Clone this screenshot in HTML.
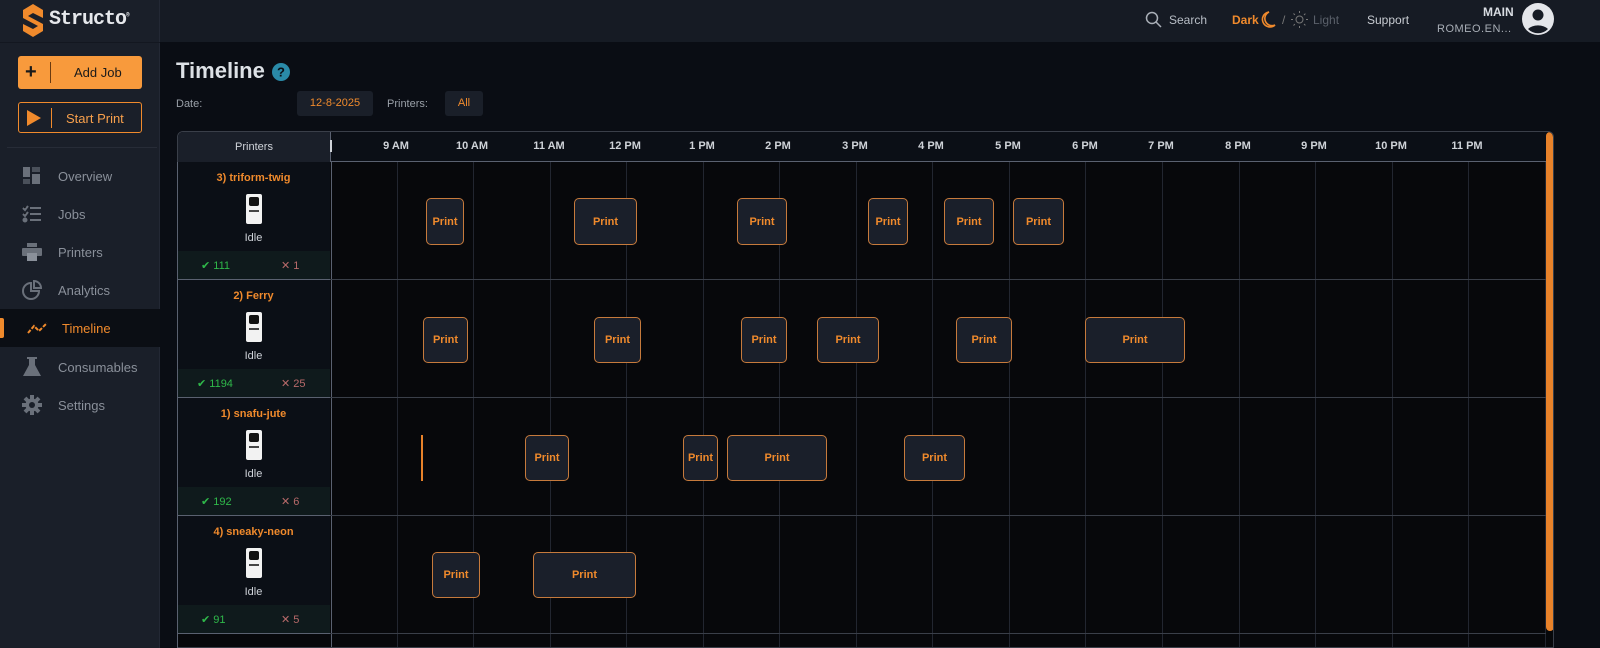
<!DOCTYPE html>
<html><head><meta charset="utf-8"><style>
*{box-sizing:border-box;margin:0;padding:0}
body{width:1600px;height:648px;overflow:hidden;background:#0a0d14;font-family:"Liberation Sans",sans-serif;position:relative;color:#c8ccd2}
.a{position:absolute}
#side{left:0;top:0;width:160px;height:648px;background:#1a1f29;border-right:1px solid #232834}
#top{left:160px;top:0;width:1440px;height:42px;background:#161b24}
.nav{position:absolute;left:0;width:160px;height:38px;font-size:13px;color:#8a909a;display:flex;align-items:center}
.nav svg{position:absolute;left:22px}
.nav span{position:absolute;left:58px}
.print{position:absolute;border:1px solid #c67a3c;border-radius:5px;background:#1a1f2a;color:#f08a2c;font-weight:bold;font-size:11px;display:flex;align-items:center;justify-content:center}
.hl{position:absolute;top:0;width:1px;height:100%;background:#222630}
.hr{position:absolute;top:140px;font-size:11px;font-weight:bold;color:#cfd3d8;transform:translateX(-50%)}
.pc{position:absolute;left:177px;width:153px;background:#0b0f16;border-bottom:1px solid #5a6170;text-align:center}
.pc .n{color:#f08a2c;font-weight:bold;font-size:11px;margin-top:10px}
.pc .ic{margin:10px auto 0;width:16px;height:30px;background:#f2f2f2;border-radius:2px;position:relative}
.pc .ic:before{content:"";position:absolute;left:3px;top:3px;width:10px;height:9px;background:#111;border-radius:2px}
.pc .ic:after{content:"";position:absolute;left:3px;top:16px;width:10px;height:2px;background:#444}
.pc .st{font-size:11px;color:#d0d4da;margin-top:8px}
.pc .bar{position:absolute;left:0;bottom:0;width:100%;height:28px;background:#0f1a1c;font-size:11px}
.ok{position:absolute;left:24px;top:8px;color:#2fb84a}
.ko{position:absolute;left:104px;top:8px;color:#b86a6a}
.rl{position:absolute;left:330px;width:1216px;height:1px;background:#3a3f49}
</style></head><body>
<div id="side" class="a">
 <svg class="a" style="left:22px;top:3px" width="22" height="35" viewBox="0 0 22 35"><path d="M11 1 L21 7 L21 15 L11 10 L6 13 L21 21 L21 28 L11 34 L1 28 L1 21 L11 26 L16 23 L1 15 L1 7 Z" fill="#f08a2c"/></svg>
 <div class="a" style="left:49px;top:8px;font-size:20px;font-weight:bold;color:#e6e8ec;font-family:'Liberation Mono',monospace;letter-spacing:-1px">Structo<sup style="font-size:6px">®</sup></div>
 <div class="a" style="left:0;top:42px;width:160px;height:1px;background:#131720"></div>
 <div class="a" style="left:18px;top:56px;width:124px;height:33px;background:#f89a3c;border-radius:3px;color:#1a1a1a;font-size:13px">
  <div class="a" style="left:7px;top:8px;font-size:20px;line-height:16px;font-weight:bold">+</div>
  <div class="a" style="left:32px;top:6px;width:1px;height:21px;background:#6a3a10"></div>
  <div class="a" style="left:56px;top:9px">Add Job</div></div>
 <div class="a" style="left:18px;top:102px;width:124px;height:31px;border:1px solid #f08a2c;border-radius:3px;color:#f8a04c;font-size:13px">
  <svg class="a" style="left:8px;top:7px" width="14" height="16"><path d="M0 0L14 8L0 16Z" fill="#f08a2c"/></svg>
  <div class="a" style="left:32px;top:5px;width:1px;height:20px;background:#f08a2c"></div>
  <div class="a" style="left:47px;top:8px">Start Print</div></div>
 <div class="a" style="left:7px;top:147px;width:150px;height:1px;background:#272c37"></div>
 <div class="nav" style="top:157px"><svg width="20" height="20"><rect x="1" y="1" width="7" height="10" fill="#6a707a"/><rect x="10" y="1" width="8" height="5" fill="#4a505a"/><rect x="1" y="13" width="7" height="5" fill="#4a505a"/><rect x="10" y="8" width="8" height="10" fill="#6a707a"/></svg><span>Overview</span></div>
 <div class="nav" style="top:195px"><svg width="20" height="18" stroke="#6a707a" stroke-width="2"><path d="M8 3H19M8 9H19M8 15H19M1 3l2 2 3-4M1 9l2 2 3-4"/><circle cx="3" cy="15" r="1.5" fill="#6a707a"/></svg><span>Jobs</span></div>
 <div class="nav" style="top:233px"><svg width="20" height="20" fill="#6a707a"><rect x="5" y="1" width="10" height="4"/><rect x="0" y="6" width="20" height="8" rx="1"/><rect x="5" y="11" width="10" height="8" fill="#8a909a"/></svg><span>Printers</span></div>
 <div class="nav" style="top:271px"><svg width="20" height="20" fill="none" stroke="#6a707a" stroke-width="2"><path d="M9 3A8 8 0 1 0 17 11H9Z"/><path d="M12 1A7 7 0 0 1 19 8H12Z"/></svg><span>Analytics</span></div>
 <div class="a" style="left:0;top:309px;width:160px;height:38px;background:#0b0e14"></div>
 <div class="a" style="left:0;top:318px;width:4px;height:20px;background:#f08a2c;border-radius:0 2px 2px 0"></div>
 <div class="nav" style="top:309px;color:#f08a2c"><svg width="22" height="14" style="left:27px"><path d="M1 12L7 5L12 10L20 2" stroke="#f08a2c" stroke-width="2" fill="none" stroke-dasharray="4 1.5"/></svg><span style="left:62px">Timeline</span></div>
 <div class="nav" style="top:348px"><svg width="20" height="20" fill="#6a707a"><rect x="5" y="0" width="10" height="2"/><path d="M7 2H13V8L19 19H1L7 8Z"/></svg><span>Consumables</span></div>
 <div class="nav" style="top:386px"><svg width="20" height="20" viewBox="0 0 20 20"><circle cx="10" cy="10" r="6.5" fill="#6a707a"/><g stroke="#6a707a" stroke-width="4"><path d="M10 0V20M0 10H20M3 3L17 17M17 3L3 17"/></g><circle cx="10" cy="10" r="3" fill="#1a1f29"/></svg><span>Settings</span></div>
</div>
<div id="top" class="a">
 <svg class="a" style="left:985px;top:11px" width="17" height="17" fill="none" stroke="#aab0b8" stroke-width="1.5"><circle cx="7" cy="7" r="5.5"/><path d="M11 11L16 16"/></svg>
 <div class="a" style="left:1009px;top:13px;font-size:12px;color:#b8bec6">Search</div>
 <div class="a" style="left:1072px;top:13px;font-size:12px;color:#f08a2c;font-weight:bold">Dark</div>
 <svg class="a" style="left:1100px;top:11px" width="16" height="17"><path d="M9 1A7.5 7.5 0 1 0 15 14A6 6 0 0 1 9 1Z" fill="none" stroke="#f08a2c" stroke-width="1.6"/></svg>
 <div class="a" style="left:1122px;top:13px;font-size:12px;color:#777">/</div>
 <svg class="a" style="left:1131px;top:11px" width="17" height="17" stroke="#777" fill="none"><circle cx="8.5" cy="8.5" r="3.5"/><path d="M8.5 0v2M8.5 15v2M0 8.5h2M15 8.5h2M2.5 2.5l1.4 1.4M13 13l1.4 1.4M2.5 14.5l1.4-1.4M13 4l1.4-1.4"/></svg>
 <div class="a" style="left:1153px;top:13px;font-size:12px;color:#5a606a">Light</div>
 <div class="a" style="left:1207px;top:13px;font-size:12px;color:#c8ccd2">Support</div>
 <div class="a" style="left:1323px;top:5px;font-size:12px;font-weight:bold;color:#d8dce2">MAIN</div>
 <div class="a" style="left:1277px;top:23px;font-size:11px;color:#a8aeb6;letter-spacing:.5px">ROMEO.EN...</div>
 <svg class="a" style="left:1362px;top:3px" width="32" height="32"><circle cx="16" cy="16" r="16" fill="#e4e6ea"/><circle cx="16" cy="12" r="5.5" fill="#161b24"/><path d="M6 26A12 8 0 0 1 26 26A14 14 0 0 1 6 26Z" fill="#161b24"/></svg>
</div>
<div class="a" style="left:176px;top:58px;font-size:22px;font-weight:bold;color:#dde1e6">Timeline</div>
<svg class="a" style="left:272px;top:63px" width="18" height="18"><circle cx="9" cy="9" r="9" fill="#2a8aa8"/><text x="9" y="13.5" text-anchor="middle" font-size="13" font-weight="bold" fill="#0a0d14" font-family="Liberation Sans">?</text></svg>
<div class="a" style="left:176px;top:98px;font-size:11px;color:#9aa0a8">Date:</div>
<div class="a" style="left:297px;top:91px;width:76px;height:25px;background:#1a1f29;border-radius:3px;font-size:11px;color:#f08a2c;text-align:center;line-height:25px">12-8-2025</div>
<div class="a" style="left:387px;top:98px;font-size:11px;color:#9aa0a8">Printers:</div>
<div class="a" style="left:445px;top:91px;width:38px;height:25px;background:#1a1f29;border-radius:3px;font-size:11px;color:#f08a2c;text-align:center;line-height:25px">All</div>

<div class="a" style="left:177px;top:131px;width:1377px;height:517px;background:#07080b;border:1px solid #3a3f49;border-radius:6px 6px 0 0;overflow:hidden">
 <div class="a" style="left:153px;top:30px;width:1216px;height:490px">
  <div class="hl" style="left:66px"></div><div class="hl" style="left:142px"></div><div class="hl" style="left:219px"></div><div class="hl" style="left:295px"></div><div class="hl" style="left:372px"></div><div class="hl" style="left:448px"></div><div class="hl" style="left:525px"></div><div class="hl" style="left:601px"></div><div class="hl" style="left:678px"></div><div class="hl" style="left:754px"></div><div class="hl" style="left:831px"></div><div class="hl" style="left:908px"></div><div class="hl" style="left:984px"></div><div class="hl" style="left:1061px"></div><div class="hl" style="left:1137px"></div><div class="hl" style="left:1214px"></div>
 </div>
 <div class="a" style="left:0;top:0;width:1377px;height:30px;background:#0b0f16;border-bottom:1px solid #5a6170"></div>
 <div class="a" style="left:0;top:0;width:153px;height:30px;background:#1a1f29;border-right:1px solid #5a6170;font-size:11px;color:#d0d4da;text-align:center;line-height:30px">Printers</div>
 <div class="a" style="left:153px;top:30px;width:1px;height:490px;background:#5a6170"></div>
 <div class="a" style="left:1368px;top:0;width:8px;height:499px;background:#e8822a;border-radius:4px"></div>
</div>
<div class="a" style="left:330px;top:140px;width:2px;height:12px;background:#cfd3d8"></div>
<div class="hr" style="left:396px">9 AM</div><div class="hr" style="left:472px">10 AM</div><div class="hr" style="left:549px">11 AM</div><div class="hr" style="left:625px">12 PM</div><div class="hr" style="left:702px">1 PM</div><div class="hr" style="left:778px">2 PM</div><div class="hr" style="left:855px">3 PM</div><div class="hr" style="left:931px">4 PM</div><div class="hr" style="left:1008px">5 PM</div><div class="hr" style="left:1085px">6 PM</div><div class="hr" style="left:1161px">7 PM</div><div class="hr" style="left:1238px">8 PM</div><div class="hr" style="left:1314px">9 PM</div><div class="hr" style="left:1391px">10 PM</div><div class="hr" style="left:1467px">11 PM</div>

<div class="pc" style="top:162px;height:118px"><div class="n">3) triform-twig</div><div class="ic"></div><div class="st">Idle</div><div class="bar"><span class="ok">✔ 111</span><span class="ko">✕ 1</span></div></div>
<div class="pc" style="top:280px;height:118px"><div class="n">2) Ferry</div><div class="ic"></div><div class="st">Idle</div><div class="bar"><span class="ok" style="left:20px">✔ 1194</span><span class="ko">✕ 25</span></div></div>
<div class="pc" style="top:398px;height:118px"><div class="n">1) snafu-jute</div><div class="ic"></div><div class="st">Idle</div><div class="bar"><span class="ok">✔ 192</span><span class="ko">✕ 6</span></div></div>
<div class="pc" style="top:516px;height:118px"><div class="n">4) sneaky-neon</div><div class="ic"></div><div class="st">Idle</div><div class="bar"><span class="ok">✔ 91</span><span class="ko">✕ 5</span></div></div>
<div class="a" style="left:177px;top:162px;width:1px;height:486px;background:#5a6170"></div>
<div class="rl" style="top:279px"></div><div class="rl" style="top:397px"></div><div class="rl" style="top:515px"></div><div class="rl" style="top:633px"></div>

<div class="print" style="left:426px;top:198px;width:38px;height:47px">Print</div>
<div class="print" style="left:574px;top:198px;width:63px;height:47px">Print</div>
<div class="print" style="left:737px;top:198px;width:50px;height:47px">Print</div>
<div class="print" style="left:868px;top:198px;width:40px;height:47px">Print</div>
<div class="print" style="left:944px;top:198px;width:50px;height:47px">Print</div>
<div class="print" style="left:1013px;top:198px;width:51px;height:47px">Print</div>

<div class="print" style="left:423px;top:317px;width:45px;height:46px">Print</div>
<div class="print" style="left:594px;top:317px;width:47px;height:46px">Print</div>
<div class="print" style="left:741px;top:317px;width:46px;height:46px">Print</div>
<div class="print" style="left:817px;top:317px;width:62px;height:46px">Print</div>
<div class="print" style="left:956px;top:317px;width:56px;height:46px">Print</div>
<div class="print" style="left:1085px;top:317px;width:100px;height:46px">Print</div>

<div class="a" style="left:421px;top:435px;width:2px;height:46px;background:#e8822a"></div>
<div class="print" style="left:525px;top:435px;width:44px;height:46px">Print</div>
<div class="print" style="left:683px;top:435px;width:35px;height:46px">Print</div>
<div class="print" style="left:727px;top:435px;width:100px;height:46px">Print</div>
<div class="print" style="left:904px;top:435px;width:61px;height:46px">Print</div>

<div class="print" style="left:432px;top:552px;width:48px;height:46px">Print</div>
<div class="print" style="left:533px;top:552px;width:103px;height:46px">Print</div>
</body></html>
